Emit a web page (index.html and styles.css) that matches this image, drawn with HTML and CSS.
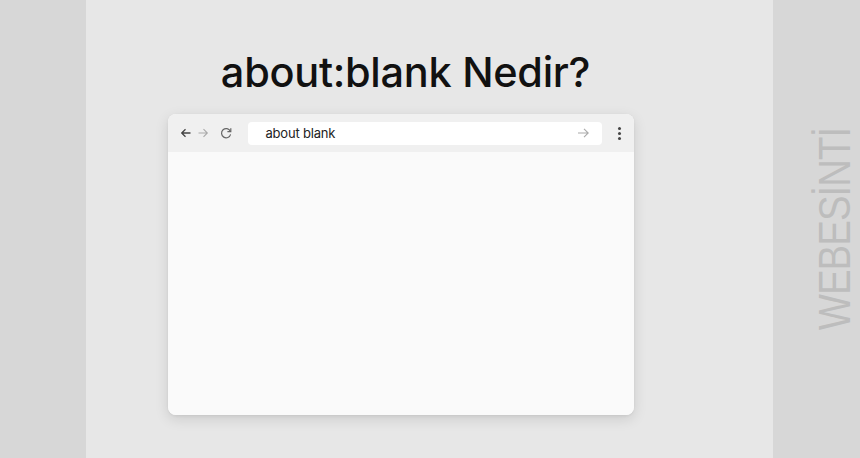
FILE: index.html
```html
<!DOCTYPE html>
<html lang="tr">
<head>
<meta charset="utf-8">
<link rel="stylesheet" href="styles.css">
</head>
<body>
<div class="page">
  <aside class="side side-left"></aside>
  <main class="center">
    <h1 class="title">about:blank Nedir?</h1>
    <div class="window">
      <div class="toolbar">
        <div class="nav">
          <svg class="ico" width="12" height="12" viewBox="0 0 12 12"><path d="M10.5 6H1.8M5.5 2.2L1.7 6l3.8 3.8" fill="none" stroke="#444" stroke-width="1.3"/></svg>
          <svg class="ico" width="12" height="12" viewBox="0 0 12 12"><path d="M1.5 6h8.7M6.5 2.2L10.3 6 6.5 9.8" fill="none" stroke="#aaa" stroke-width="1.1"/></svg>
          <svg class="ico reload" width="14" height="14" viewBox="0 0 14 14"><path d="M11.3 5.2A4.6 4.6 0 1 0 11.6 8.4" fill="none" stroke="#666" stroke-width="1.2"/><path d="M11.8 2.2v3.4H8.4" fill="none" stroke="#666" stroke-width="1.2"/></svg>
        </div>
        <div class="address">
          <span class="url">about blank</span>
          <svg width="13" height="12" viewBox="0 0 13 12"><path d="M1 6h10.2M7 1.8L11.2 6 7 10.2" fill="none" stroke="#aaa" stroke-width="1.1"/></svg>
        </div>
        <div class="menu"><i></i><i></i><i></i></div>
      </div>
      <div class="content"></div>
    </div>
  </main>
  <aside class="side side-right">
    <span class="mark">WEBESİNTİ</span>
  </aside>
</div>
</body>
</html>
```
FILE: styles.css
```css
* { box-sizing: border-box; }
html, body { margin: 0; padding: 0; }
body { width: 860px; height: 458px; overflow: hidden; font-family: Inter, "Liberation Sans", sans-serif; }
.page { display: flex; height: 458px; }
.side { background: #d7d7d7; }
.side-left { width: 86px; }
.side-right { width: 87px; position: relative; }
.center { flex: 1; background: #e7e7e7; display: flex; flex-direction: column; align-items: center; padding-top: 45px; padding-right: 58px; }
.title { margin: 0 0 0 10px; font-size: 41.5px; font-weight: 500; color: #111; letter-spacing: -0.3px; line-height: 54px; }
.window { margin-top: 15px; width: 466px; height: 301px; background: #fafafa; border-radius: 8px; box-shadow: 0 4px 14px rgba(0,0,0,0.12), 0 1px 3px rgba(0,0,0,0.06); overflow: hidden; display: flex; flex-direction: column; }
.toolbar { height: 38px; background: #f0f0f0; display: flex; align-items: center; padding: 0 12px 0 12px; }
.nav { display: flex; align-items: center; gap: 5px; width: 68px; }
.ico { display: block; }
.reload { margin-left: 5px; }
.address { flex: 1; height: 23px; background: #fff; border-radius: 4px; display: flex; align-items: center; justify-content: space-between; padding: 0 12px 0 18px; }
.url { font-size: 13px; color: #222; letter-spacing: -0.2px; }
.menu { width: 20px; display: flex; flex-direction: column; align-items: flex-end; gap: 2px; padding-right: 1px; }
.menu i { width: 3px; height: 3px; border-radius: 50%; background: #444; display: block; }
.content { flex: 1; background: #fafafa; }
.mark { position: absolute; left: 62px; top: 229px; transform: translate(-50%, -50%) rotate(-90deg) scaleX(0.87); font-family: "Liberation Sans", sans-serif; font-size: 44px; color: #bdbdbd; white-space: nowrap; letter-spacing: -1px; line-height: 1; }
```
